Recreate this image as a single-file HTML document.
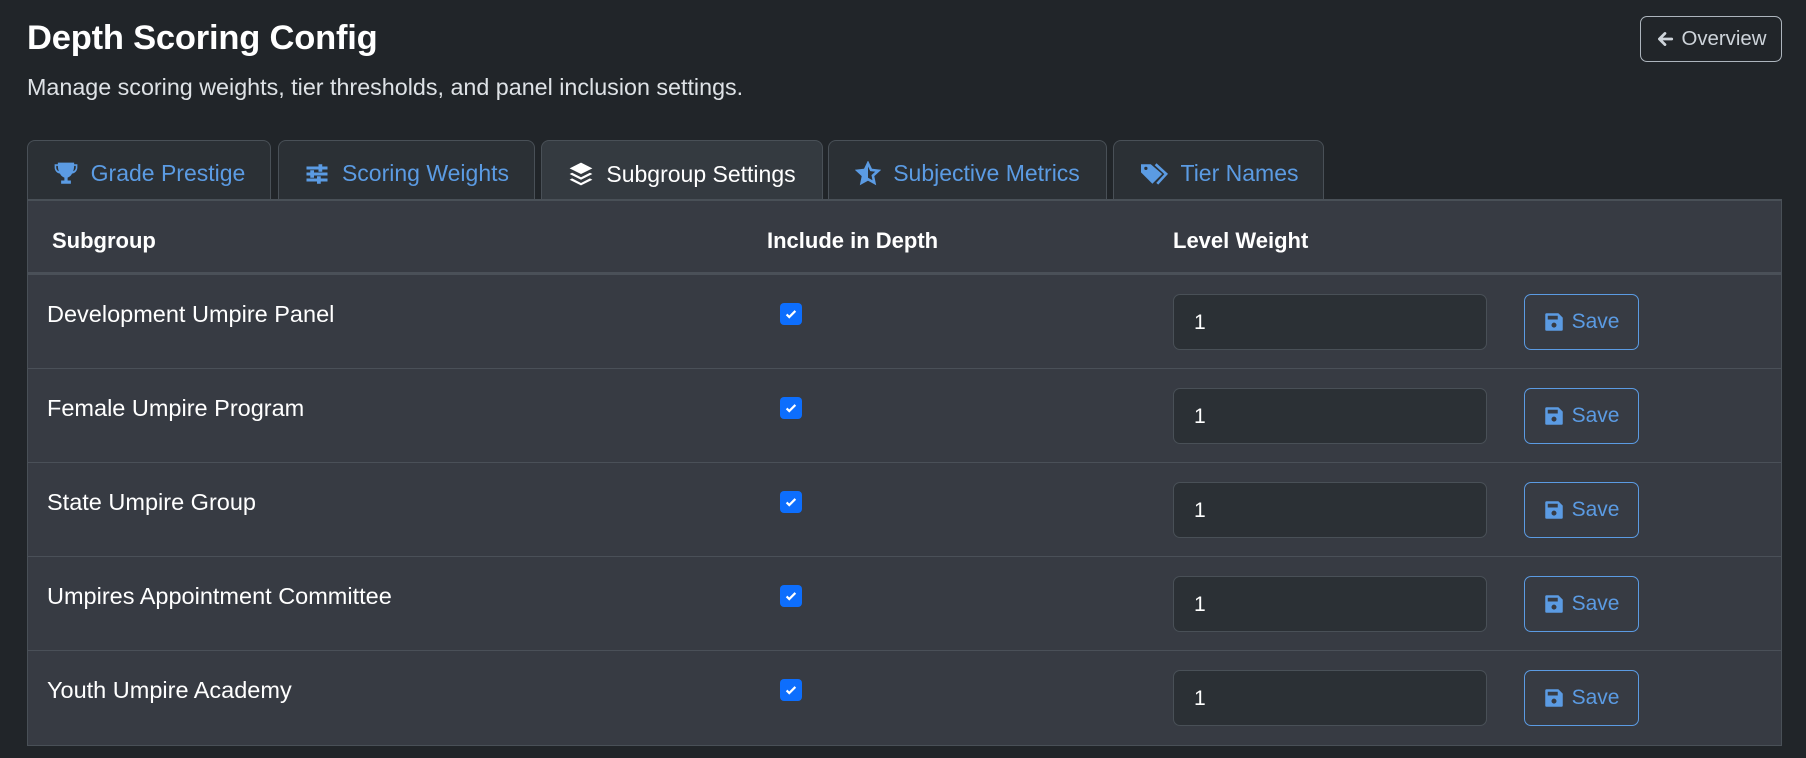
<!DOCTYPE html>
<html><head><meta charset="utf-8"><style>
*{box-sizing:border-box;margin:0;padding:0}
body{width:1806px;height:758px;background:#212529;font-family:"Liberation Sans",sans-serif;color:#dee2e6;position:relative;overflow:hidden}
.abs{position:absolute}
h1{position:absolute;left:27px;top:19px;font-size:34.5px;font-weight:700;color:#fff;letter-spacing:-0.2px}
.sub{left:27px;top:74px;font-size:23.3px;color:#dee2e6}
.ov{left:1640px;top:16px;width:142px;height:46px;border:1px solid #adb5bd;border-radius:7px;color:#ced4da;font-size:20.4px;display:flex;align-items:center;justify-content:center;gap:8px}
.tab{position:absolute;top:140px;height:60px;border:1px solid #495057;border-bottom:none;border-radius:8px 8px 0 0;background:#2b3035;color:#5b9be3;font-size:23px;display:flex;align-items:center;justify-content:center;gap:12px;padding-top:6px}
.tab.act{background:#343a40;color:#fff;height:61px}
.tbl{left:27px;top:199px;width:1755px;height:547px;background:#373b43;border:1px solid #495057;border-top:2px solid #495057}
.th{position:absolute;top:228px;font-size:22px;font-weight:700;color:#fff}
.hl{left:28px;top:272px;width:1753px;height:3px;background:#4a5058}
.row{position:absolute;left:28px;width:1753px;height:94px;border-bottom:1px solid #4a5058}
.nm{position:absolute;left:19px;top:26px;font-size:23.5px;color:#fff}
.cb{position:absolute;left:752px;top:28px;width:22px;height:22px;border-radius:4px;background:#0d6efd;display:flex;align-items:center;justify-content:center}
.inp{position:absolute;left:1145px;top:19px;width:314px;height:56px;border:1px solid #495057;border-radius:7px;background:#2b3035;color:#fff;font-size:21px;padding:16px 0 0 20px}
.sv{position:absolute;left:1496px;top:19px;width:115px;height:56px;border:1px solid #5b9be3;border-radius:7px;color:#5b9be3;font-size:21px;display:flex;align-items:center;justify-content:center;gap:8px}
</style></head><body>
<h1>Depth Scoring Config</h1>
<div class="abs sub">Manage scoring weights, tier thresholds, and panel inclusion settings.</div>
<div class="abs ov"><svg width="18" height="18" viewBox="0 0 16 16"><path d="M14 8H3M8 3L3 8l5 5" stroke="#ced4da" stroke-width="2.4" fill="none" stroke-linecap="round" stroke-linejoin="round"/></svg>Overview</div>

<div class="tab" style="left:27px;width:244px"><svg width="26" height="26" viewBox="0 0 16 16"><path fill="#5b9be3" d="M3 1h10v1h2v2c0 2-1.5 3.5-3.3 3.8C11 9.3 9.8 10 9 10.2V12h2v2H5v-2h2v-1.8C6.2 10 5 9.3 4.3 7.8 2.5 7.5 1 6 1 4V2h2zm-1 2v1c0 1 .6 2 1.6 2.3C3.2 5.3 3 4 3 3zm11 0c0 1-.2 2.3-.6 3.3C13.4 6 14 5 14 4V3z"/></svg>Grade Prestige</div>
<div class="tab" style="left:278px;width:257px"><svg width="26" height="24" viewBox="0 0 16 16"><path fill="#5b9be3" d="M1 3h14v2H1zM1 7h14v2H1zM1 11h14v2H1z"/><rect x="9" y="1.5" width="2.5" height="5" fill="#5b9be3"/><rect x="3.5" y="5.5" width="2.5" height="5" fill="#5b9be3"/><rect x="8" y="9.5" width="2.5" height="5" fill="#5b9be3"/></svg>Scoring Weights</div>
<div class="tab act" style="left:541px;width:282px"><svg width="26" height="26" viewBox="0 0 16 16"><path fill="#fff" d="M8 1l7 3.5L8 8 1 4.5z"/><path fill="#fff" d="M2.5 7.2L8 10l5.5-2.8L15 8l-7 3.5L1 8z"/><path fill="#fff" d="M2.5 10.7L8 13.5l5.5-2.8L15 11.5 8 15l-7-3.5z"/></svg>Subgroup Settings</div>
<div class="tab" style="left:828px;width:279px"><svg width="26" height="26" viewBox="0 0 16 16"><path fill="none" stroke="#5b9be3" stroke-width="1.6" d="M8 1.5l1.9 4 4.4.5-3.3 3 .9 4.4L8 11.2 4.1 13.4 5 9 1.7 6l4.4-.5z"/><path fill="#5b9be3" d="M8 1.5v9.7L4.1 13.4 5 9 1.7 6l4.4-.5z"/></svg>Subjective Metrics</div>
<div class="tab" style="left:1113px;width:211px"><svg width="30" height="26" viewBox="0 0 18 16"><path fill="#5b9be3" d="M1 2v5l7 7 6-6-7-6zm3 1.5a1 1 0 110 2 1 1 0 010-2z"/><path fill="none" stroke="#5b9be3" stroke-width="1.6" d="M10 2l6.5 6L11 14"/></svg>Tier Names</div>

<div class="abs tbl"></div>
<div class="th" style="left:52px">Subgroup</div>
<div class="th" style="left:767px">Include in Depth</div>
<div class="th" style="left:1173px">Level Weight</div>
<div class="abs hl"></div>

<div class="row" style="top:275px"><div class="nm">Development Umpire Panel</div><div class="cb"><svg width="14" height="14" viewBox="0 0 16 16"><path d="M3 8.5l3 3 7-7" stroke="#fff" stroke-width="2.5" fill="none"/></svg></div><div class="inp">1</div><div class="sv"><svg width="20" height="20" viewBox="0 0 16 16"><path fill="#5b9be3" d="M2 1h9.5L15 4.5V14a1 1 0 01-1 1H2a1 1 0 01-1-1V2a1 1 0 011-1zm1 2v3h8V3zm5 5.5a2 2 0 100 4 2 2 0 000-4z"/></svg>Save</div></div>
<div class="row" style="top:369px"><div class="nm">Female Umpire Program</div><div class="cb"><svg width="14" height="14" viewBox="0 0 16 16"><path d="M3 8.5l3 3 7-7" stroke="#fff" stroke-width="2.5" fill="none"/></svg></div><div class="inp">1</div><div class="sv"><svg width="20" height="20" viewBox="0 0 16 16"><path fill="#5b9be3" d="M2 1h9.5L15 4.5V14a1 1 0 01-1 1H2a1 1 0 01-1-1V2a1 1 0 011-1zm1 2v3h8V3zm5 5.5a2 2 0 100 4 2 2 0 000-4z"/></svg>Save</div></div>
<div class="row" style="top:463px"><div class="nm">State Umpire Group</div><div class="cb"><svg width="14" height="14" viewBox="0 0 16 16"><path d="M3 8.5l3 3 7-7" stroke="#fff" stroke-width="2.5" fill="none"/></svg></div><div class="inp">1</div><div class="sv"><svg width="20" height="20" viewBox="0 0 16 16"><path fill="#5b9be3" d="M2 1h9.5L15 4.5V14a1 1 0 01-1 1H2a1 1 0 01-1-1V2a1 1 0 011-1zm1 2v3h8V3zm5 5.5a2 2 0 100 4 2 2 0 000-4z"/></svg>Save</div></div>
<div class="row" style="top:557px"><div class="nm">Umpires Appointment Committee</div><div class="cb"><svg width="14" height="14" viewBox="0 0 16 16"><path d="M3 8.5l3 3 7-7" stroke="#fff" stroke-width="2.5" fill="none"/></svg></div><div class="inp">1</div><div class="sv"><svg width="20" height="20" viewBox="0 0 16 16"><path fill="#5b9be3" d="M2 1h9.5L15 4.5V14a1 1 0 01-1 1H2a1 1 0 01-1-1V2a1 1 0 011-1zm1 2v3h8V3zm5 5.5a2 2 0 100 4 2 2 0 000-4z"/></svg>Save</div></div>
<div class="row" style="top:651px;border-bottom:none"><div class="nm">Youth Umpire Academy</div><div class="cb"><svg width="14" height="14" viewBox="0 0 16 16"><path d="M3 8.5l3 3 7-7" stroke="#fff" stroke-width="2.5" fill="none"/></svg></div><div class="inp">1</div><div class="sv"><svg width="20" height="20" viewBox="0 0 16 16"><path fill="#5b9be3" d="M2 1h9.5L15 4.5V14a1 1 0 01-1 1H2a1 1 0 01-1-1V2a1 1 0 011-1zm1 2v3h8V3zm5 5.5a2 2 0 100 4 2 2 0 000-4z"/></svg>Save</div></div>
</body></html>
